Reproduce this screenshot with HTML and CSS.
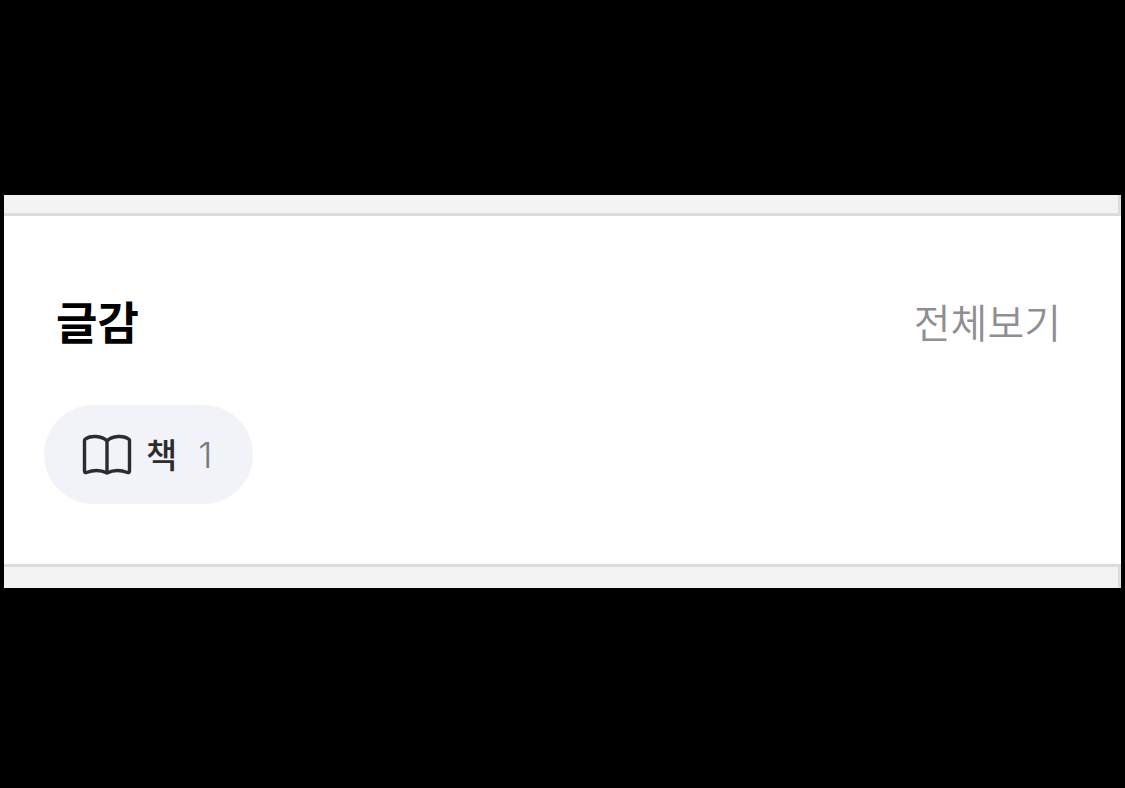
FILE: index.html
```html
<!DOCTYPE html>
<html lang="ko">
<head>
<meta charset="utf-8">
<meta name="viewport" content="width=device-width, initial-scale=1">
<title>글감</title>
<link rel="stylesheet" href="styles.css">
</head>
<body>
<main class="page">
  <div class="gutter gutter-top"></div>
  <section class="card" aria-labelledby="card-title">
    <header class="card-header">
      <h2 class="card-title" id="card-title">글감</h2>
      <a class="view-all" href="#all">전체보기</a>
    </header>
    <div class="chips">
      <button class="chip" type="button">
        <svg class="chip-icon" viewBox="0 0 50 42" aria-hidden="true">
          <path d="M25 7C20 1.5 8 1 2.8 5.5Q2.5 6 2.5 7V37Q2.5 39 4.5 38.5C11 36 19 36 25 39C31 36 39 36 45.5 38.5Q47.5 39 47.5 37V7Q47.5 6 47.2 5.5C42 1 30 1.5 25 7V39"/>
        </svg>
        <span class="chip-text">
          <span class="chip-label">책</span>
          <span class="chip-count">1</span>
        </span>
      </button>
    </div>
  </section>
  <div class="gutter gutter-bottom"></div>
</main>
</body>
</html>
```
FILE: styles.css
```css
* {
  box-sizing: border-box;
}

body {
  margin: 0;
  background: #000;
  font-family: "Noto Sans CJK KR", sans-serif;
}

.page {
  padding: 195px 4px;
}

.gutter {
  background: #f3f3f3;
  border: 0 solid #dcdcdc;
  border-right-width: 3px;
}

.gutter-top {
  height: 21px;
  border-bottom-width: 3px;
}

.gutter-bottom {
  height: 24px;
  border-top-width: 3px;
}

.card {
  padding: 73px 60px 60px 40px;
  background: #fff;
}

.card-header {
  display: flex;
  align-items: center;
  justify-content: space-between;
  padding-left: 12px;
}

.card-title {
  margin: 0;
  font-size: 45px;
  line-height: 64px;
  font-weight: 700;
  color: #000;
}

.view-all {
  font-size: 40px;
  line-height: 64px;
  font-weight: 350;
  color: #8e8e93;
  text-decoration: none;
}

.chips {
  display: flex;
  margin-top: 52px;
}

.chip {
  display: flex;
  align-items: center;
  padding: 25px 41px 25px 38px;
  border: 0;
  border-radius: 50px;
  background: #f2f3f8;
  font-family: inherit;
  font-size: 34px;
  line-height: 48px;
  color: #2b2c2e;
}

.chip-icon {
  width: 50px;
  height: 42px;
  margin-right: 14px;
  fill: none;
  stroke: currentColor;
  stroke-width: 3.4;
  stroke-linejoin: round;
}

.chip-text {
  display: flex;
  align-items: baseline;
  gap: 21px;
}

.chip-label {
  font-weight: 500;
}

.chip-count {
  font-family: Inter, sans-serif;
  font-size: 36px;
  font-weight: 300;
  color: #77787b;
}
```
